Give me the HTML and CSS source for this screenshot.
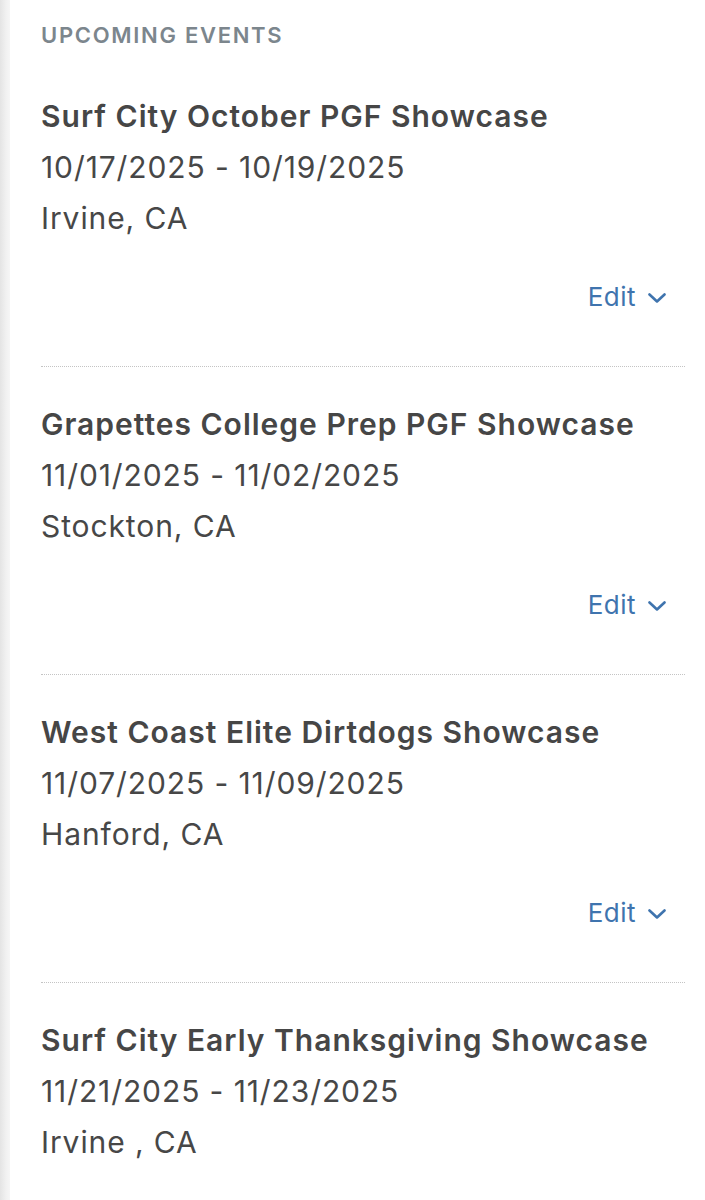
FILE: index.html
```html
<!DOCTYPE html>
<html lang="en">
<head>
<meta charset="utf-8">
<title>Upcoming Events</title>
<link rel="stylesheet" href="styles.css">
</head>
<body>
<div class="page">
  <div class="strip"></div>
  <main class="content">
    <h2 class="heading">UPCOMING EVENTS</h2>
    <ul class="events">
      <li class="event">
        <div class="title">Surf City October PGF Showcase</div>
        <div class="line">10/17/2025 - 10/19/2025</div>
        <div class="line">Irvine, CA</div>
        <div class="actions"><a class="edit">Edit <svg class="chev" width="18" height="10" viewBox="0 0 18 10"><path d="M1.5 1.5 L9 8.5 L16.5 1.5" fill="none" stroke="currentColor" stroke-width="2.6" stroke-linecap="round" stroke-linejoin="round"/></svg></a></div>
      </li>
      <li class="event">
        <div class="title">Grapettes College Prep PGF Showcase</div>
        <div class="line">11/01/2025 - 11/02/2025</div>
        <div class="line">Stockton, CA</div>
        <div class="actions"><a class="edit">Edit <svg class="chev" width="18" height="10" viewBox="0 0 18 10"><path d="M1.5 1.5 L9 8.5 L16.5 1.5" fill="none" stroke="currentColor" stroke-width="2.6" stroke-linecap="round" stroke-linejoin="round"/></svg></a></div>
      </li>
      <li class="event">
        <div class="title">West Coast Elite Dirtdogs Showcase</div>
        <div class="line">11/07/2025 - 11/09/2025</div>
        <div class="line">Hanford, CA</div>
        <div class="actions"><a class="edit">Edit <svg class="chev" width="18" height="10" viewBox="0 0 18 10"><path d="M1.5 1.5 L9 8.5 L16.5 1.5" fill="none" stroke="currentColor" stroke-width="2.6" stroke-linecap="round" stroke-linejoin="round"/></svg></a></div>
      </li>
      <li class="event last">
        <div class="title">Surf City Early Thanksgiving Showcase</div>
        <div class="line">11/21/2025 - 11/23/2025</div>
        <div class="line">Irvine , CA</div>
      </li>
    </ul>
  </main>
</div>
</body>
</html>
```
FILE: styles.css
```css
html, body {
  margin: 0;
  padding: 0;
  background: #ffffff;
}
body {
  font-family: Inter, "Noto Sans", "Liberation Sans", sans-serif;
  color: #454545;
}
.page {
  display: flex;
  height: 1200px;
  overflow: hidden;
}
.strip {
  width: 10px;
  flex: 0 0 10px;
  background: linear-gradient(to right, #e4e4e4, #f1f1f1 60%, #f6f6f6);
}
.content {
  flex: 1;
  padding: 20px 20px 0 31px;
}
.heading {
  margin: 0;
  font-size: 22px;
  line-height: 30px;
  font-weight: 600;
  letter-spacing: 1.7px;
  color: #7c868d;
}
.events {
  list-style: none;
  margin: 0;
  padding: 0;
}
.event {
  padding-top: 41px;
  padding-bottom: 44px;
  border-bottom: 1px dotted #c4c4c4;
}
.event + .event {
  padding-top: 32px;
}
.event.last {
  border-bottom: none;
}
.title {
  font-size: 30px;
  line-height: 51px;
  font-weight: 600;
  letter-spacing: 1px;
  color: #464646;
  white-space: nowrap;
}
.line {
  font-size: 30px;
  line-height: 51px;
  font-weight: 400;
  letter-spacing: 0.9px;
  color: #474747;
}
.actions {
  display: flex;
  justify-content: flex-end;
  margin-top: 27px;
  padding-right: 19px;
}
.edit {
  display: flex;
  align-items: center;
  gap: 12px;
  font-size: 26px;
  line-height: 51px;
  letter-spacing: 0.5px;
  color: #3f74ae;
}
.chev {
  display: block;
  margin-top: 2px;
}
```
